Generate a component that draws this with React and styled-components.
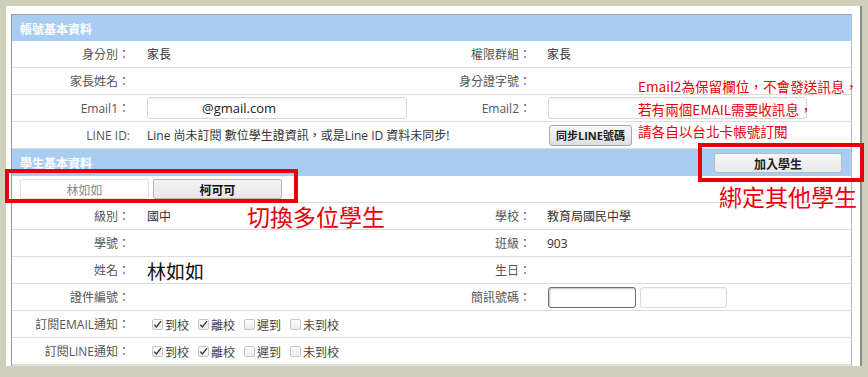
import React from "react";
import styled, { createGlobalStyle } from "styled-components";

const GlobalStyle = createGlobalStyle`
  html, body { margin: 0; padding: 0; background: #cfcfba; }
  body { font-family: "Open Sans", "Noto Sans CJK TC", sans-serif; }
  * { box-sizing: border-box; }
`;

const Page = styled.div`
  position: relative;
  width: 868px;
  height: 377px;
  background: #cfcfba;
  padding: 6px 0 0 6px;
  overflow: hidden;
`;

const Card = styled.div`
  width: 856px;
  height: 360px;
  background: #fff;
  border-right: 2px solid #8d8d88;
  padding: 8px 8px 0 5px;
`;

const Panel = styled.div`
  border-left: 1px solid #9a9a9a;
  border-right: 1px solid #b8b8b8;
  height: 352px;
  overflow: hidden;
`;

const SectionHeader = styled.div`
  height: 27px;
  background: #a9cdf2;
  border-top: ${(p) => (p.$first ? "1px solid #9aa3ad" : "none")};
  color: #fff;
  font-size: 12px;
  font-weight: 700;
  display: flex;
  align-items: center;
  justify-content: space-between;
  padding: 0 9px 0 8px;
  font-family: "Noto Sans CJK TC", sans-serif;
`;

const Row = styled.div`
  display: grid;
  grid-template-columns: 123px 305px 96px 1fr;
  height: 27px;
  border-bottom: 1px solid #dcdcdc;
  align-items: center;
  font-size: 12px;
`;

const Label = styled.div`
  text-align: right;
  padding-right: 5px;
  color: #555;
  white-space: nowrap;
`;

const Value = styled.div`
  padding-left: ${(p) => (p.$pl != null ? p.$pl : 12)}px;
  color: #333;
  white-space: nowrap;
  grid-column: ${(p) => p.$span || "auto"};
  display: flex;
  align-items: center;
  gap: 4px;
`;

const BigName = styled.span`
  font-size: 19px;
  color: #111;
  font-weight: 400;
  font-family: "Noto Sans CJK TC", serif;
  line-height: 1;
`;

const Input = styled.div`
  width: ${(p) => p.$w}px;
  height: ${(p) => p.$h || 22}px;
  border: 1px solid ${(p) => (p.$focus ? "#6f6f6f" : "#d8d8d8")};
  border-radius: 3px;
  background: #fff;
  box-shadow: ${(p) =>
    p.$focus ? "inset 1px 1px 2px rgba(0,0,0,0.25)" : "inset 0 1px 1px rgba(0,0,0,0.04)"};
  font-size: 13px;
  color: #222;
  display: flex;
  align-items: center;
  padding-left: ${(p) => p.$pad || 4}px;
`;

const SyncButton = styled.button`
  height: 21px;
  padding: 0 6px;
  border: 1px solid #a8a8a8;
  border-radius: 3px;
  background: linear-gradient(#f9f9f9, #dedede);
  font-family: "Open Sans", "Noto Sans CJK TC", sans-serif;
  font-size: 11px;
  font-weight: 700;
  color: #222;
  margin-left: 1px;
`;

const AddButton = styled.button`
  width: 128px;
  height: 20px;
  border: 1px solid #bcbcbc;
  border-radius: 3px;
  background: linear-gradient(#f7f7f7, #e9e9e9);
  font-family: "Noto Sans CJK TC", sans-serif;
  font-size: 12px;
  font-weight: 700;
  color: #222;
`;

const TabRow = styled.div`
  height: 27px;
  display: flex;
  align-items: center;
  gap: 4px;
  padding-left: 8px;
  border-bottom: 1px solid #dcdcdc;
`;

const Tab = styled.div`
  width: 129px;
  height: 20px;
  display: flex;
  align-items: center;
  justify-content: center;
  font-size: 12px;
  font-family: "Noto Sans CJK TC", sans-serif;
  border: 1px solid ${(p) => (p.$active ? "#b9b9b9" : "#e2e2e2")};
  background: ${(p) => (p.$active ? "linear-gradient(#f4f4f4, #e6e6e6)" : "#fff")};
  color: ${(p) => (p.$active ? "#111" : "#888")};
  font-weight: ${(p) => (p.$active ? 700 : 400)};
  border-radius: 2px;
`;

const Checks = styled.div`
  display: flex;
  align-items: center;
  gap: 9px;
  padding-left: 17px;
`;

const CheckItem = styled.label`
  display: flex;
  align-items: center;
  gap: 2px;
  color: #444;
  font-size: 12px;
  font-family: "Noto Sans CJK TC", sans-serif;
`;

const Box = styled.span`
  width: 11px;
  height: 11px;
  border: 1px solid #c6c6c6;
  border-radius: 2px;
  background: linear-gradient(#fdfdfd, #ececec);
  display: inline-flex;
  align-items: center;
  justify-content: center;
`;

const Ticks = styled.div`
  height: 3px;
  border-top: 1px solid #e2e2e2;
  background: repeating-linear-gradient(
    to right,
    transparent 0 28px,
    #d8d8d8 28px 29px,
    transparent 29px 64.5px
  );
`;

const RedBox = styled.div`
  position: absolute;
  left: ${(p) => p.$x}px;
  top: ${(p) => p.$y}px;
  width: ${(p) => p.$w}px;
  height: ${(p) => p.$h}px;
  border: 4px solid #e8000a;
  pointer-events: none;
`;

const BigNote = styled.div`
  position: absolute;
  left: ${(p) => p.$x}px;
  top: ${(p) => p.$y}px;
  font-size: 23px;
  line-height: 23px;
  color: #e8000a;
  font-family: "Noto Sans CJK TC", sans-serif;
  white-space: nowrap;
`;

const SmallNote = styled.div`
  position: absolute;
  left: 638px;
  top: 75px;
  font-size: 13.6px;
  line-height: 22.5px;
  color: #e8000a;
  font-family: "Noto Sans CJK TC", sans-serif;
  font-weight: 400;
  white-space: nowrap;
`;

function Check({ checked, children }) {
  return (
    <CheckItem>
      <Box>
        {checked && (
          <svg width="9" height="9" viewBox="0 0 9 9">
            <polyline points="1.2,4.6 3.4,7 8,1.2" fill="none" stroke="#333" strokeWidth="1.3" />
          </svg>
        )}
      </Box>
      {children}
    </CheckItem>
  );
}

function CheckRow({ label }) {
  return (
    <Row>
      <Label>{label}</Label>
      <Checks style={{ gridColumn: "2 / 5" }}>
        <Check checked>到校</Check>
        <Check checked>離校</Check>
        <Check>遲到</Check>
        <Check>未到校</Check>
      </Checks>
    </Row>
  );
}

export default function App() {
  return (
    <>
      <GlobalStyle />
      <Page>
        <Card>
          <Panel>
            <SectionHeader $first>帳號基本資料</SectionHeader>
            <Row>
              <Label>身分別：</Label>
              <Value>家長</Value>
              <Label>權限群組：</Label>
              <Value $pl={11}>家長</Value>
            </Row>
            <Row>
              <Label>家長姓名：</Label>
              <Value />
              <Label>身分證字號：</Label>
              <Value $pl={11} />
            </Row>
            <Row>
              <Label>Email1：</Label>
              <Value>
                <Input $w={260} $pad={54}>@gmail.com</Input>
              </Value>
              <Label>Email2：</Label>
              <Value>
                <Input $w={259} />
              </Value>
            </Row>
            <Row>
              <Label>LINE ID:</Label>
              <Value $span="2 / 4">Line 尚未訂閱 數位學生證資訊，或是Line ID 資料未同步!</Value>
              <Value>
                <SyncButton>同步LINE號碼</SyncButton>
              </Value>
            </Row>
            <SectionHeader>
              學生基本資料
              <AddButton>加入學生</AddButton>
            </SectionHeader>
            <TabRow>
              <Tab>林如如</Tab>
              <Tab $active>柯可可</Tab>
            </TabRow>
            <Row>
              <Label>級別：</Label>
              <Value>國中</Value>
              <Label>學校：</Label>
              <Value $pl={11}>教育局國民中學</Value>
            </Row>
            <Row>
              <Label>學號：</Label>
              <Value />
              <Label>班級：</Label>
              <Value $pl={11}>903</Value>
            </Row>
            <Row>
              <Label>姓名：</Label>
              <Value>
                <BigName>林如如</BigName>
              </Value>
              <Label>生日：</Label>
              <Value $pl={11} />
            </Row>
            <Row>
              <Label>證件編號：</Label>
              <Value />
              <Label>簡訊號碼：</Label>
              <Value>
                <Input $w={88} $h={21} $focus />
                <Input $w={87} $h={21} />
              </Value>
            </Row>
            <CheckRow label="訂閱EMAIL通知：" />
            <CheckRow label="訂閱LINE通知：" />
            <Ticks />
          </Panel>
        </Card>

        <SmallNote>
          Email2為保留欄位，不會發送訊息，
          <br />
          若有兩個EMAIL需要收訊息，
          <br />
          請各自以台北卡帳號訂閱
        </SmallNote>
        <RedBox $x={5} $y={169} $w={293} $h={34} />
        <RedBox $x={698} $y={143} $w={166} $h={39} />
        <BigNote $x={247} $y={205}>切換多位學生</BigNote>
        <BigNote $x={719} $y={185}>綁定其他學生</BigNote>
      </Page>
    </>
  );
}
